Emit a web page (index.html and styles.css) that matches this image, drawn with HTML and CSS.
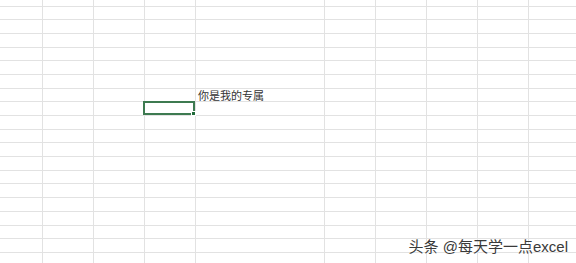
FILE: index.html
```html
<!DOCTYPE html>
<html>
<head>
<meta charset="utf-8">
<link rel="stylesheet" href="styles.css">
</head>
<body>
<div class="sheet">
  <div class="row first"><span class="c"></span><span class="c"></span><span class="c"></span><span class="c"></span><span class="c wide"></span><span class="c"></span><span class="c"></span><span class="c"></span><span class="c"></span><span class="c"></span></div>
  <div class="row"><span class="c"></span><span class="c"></span><span class="c"></span><span class="c"></span><span class="c wide"></span><span class="c"></span><span class="c"></span><span class="c"></span><span class="c"></span><span class="c"></span></div>
  <div class="row"><span class="c"></span><span class="c"></span><span class="c"></span><span class="c"></span><span class="c wide"></span><span class="c"></span><span class="c"></span><span class="c"></span><span class="c"></span><span class="c"></span></div>
  <div class="row"><span class="c"></span><span class="c"></span><span class="c"></span><span class="c"></span><span class="c wide"></span><span class="c"></span><span class="c"></span><span class="c"></span><span class="c"></span><span class="c"></span></div>
  <div class="row"><span class="c"></span><span class="c"></span><span class="c"></span><span class="c"></span><span class="c wide"></span><span class="c"></span><span class="c"></span><span class="c"></span><span class="c"></span><span class="c"></span></div>
  <div class="row"><span class="c"></span><span class="c"></span><span class="c"></span><span class="c"></span><span class="c wide"></span><span class="c"></span><span class="c"></span><span class="c"></span><span class="c"></span><span class="c"></span></div>
  <div class="row"><span class="c"></span><span class="c"></span><span class="c"></span><span class="c"></span><span class="c wide"></span><span class="c"></span><span class="c"></span><span class="c"></span><span class="c"></span><span class="c"></span></div>
  <div class="row"><span class="c"></span><span class="c"></span><span class="c"></span><span class="c"></span><span class="c wide text">你是我的专属</span><span class="c"></span><span class="c"></span><span class="c"></span><span class="c"></span><span class="c"></span></div>
  <div class="row"><span class="c"></span><span class="c"></span><span class="c"></span><span class="c selected"><span class="sel"><span class="handle"></span></span></span><span class="c wide"></span><span class="c"></span><span class="c"></span><span class="c"></span><span class="c"></span><span class="c"></span></div>
  <div class="row"><span class="c"></span><span class="c"></span><span class="c"></span><span class="c"></span><span class="c wide"></span><span class="c"></span><span class="c"></span><span class="c"></span><span class="c"></span><span class="c"></span></div>
  <div class="row"><span class="c"></span><span class="c"></span><span class="c"></span><span class="c"></span><span class="c wide"></span><span class="c"></span><span class="c"></span><span class="c"></span><span class="c"></span><span class="c"></span></div>
  <div class="row"><span class="c"></span><span class="c"></span><span class="c"></span><span class="c"></span><span class="c wide"></span><span class="c"></span><span class="c"></span><span class="c"></span><span class="c"></span><span class="c"></span></div>
  <div class="row"><span class="c"></span><span class="c"></span><span class="c"></span><span class="c"></span><span class="c wide"></span><span class="c"></span><span class="c"></span><span class="c"></span><span class="c"></span><span class="c"></span></div>
  <div class="row"><span class="c"></span><span class="c"></span><span class="c"></span><span class="c"></span><span class="c wide"></span><span class="c"></span><span class="c"></span><span class="c"></span><span class="c"></span><span class="c"></span></div>
  <div class="row"><span class="c"></span><span class="c"></span><span class="c"></span><span class="c"></span><span class="c wide"></span><span class="c"></span><span class="c"></span><span class="c"></span><span class="c"></span><span class="c"></span></div>
  <div class="row"><span class="c"></span><span class="c"></span><span class="c"></span><span class="c"></span><span class="c wide"></span><span class="c"></span><span class="c"></span><span class="c"></span><span class="c"></span><span class="c"></span></div>
  <div class="row"><span class="c"></span><span class="c"></span><span class="c"></span><span class="c"></span><span class="c wide"></span><span class="c"></span><span class="c"></span><span class="c"></span><span class="c"></span><span class="c"></span></div>
  <div class="row"><span class="c"></span><span class="c"></span><span class="c"></span><span class="c"></span><span class="c wide"></span><span class="c"></span><span class="c"></span><span class="c"></span><span class="c"></span><span class="c"></span></div>
  <div class="row"><span class="c"></span><span class="c"></span><span class="c"></span><span class="c"></span><span class="c wide"></span><span class="c"></span><span class="c"></span><span class="c"></span><span class="c"></span><span class="c"></span></div>
  <div class="row"><span class="c"></span><span class="c"></span><span class="c"></span><span class="c"></span><span class="c wide"></span><span class="c"></span><span class="c"></span><span class="c"></span><span class="c"></span><span class="c"></span></div>
  <div class="watermark">头条 @每天学一点excel</div>
</div>
</body>
</html>
```
FILE: styles.css
```css
html, body {
  margin: 0;
  padding: 0;
  background: #ffffff;
}
.sheet {
  position: relative;
  width: 576px;
  height: 263px;
  overflow: hidden;
  background: #ffffff;
  font-family: "Noto Sans CJK SC", "Noto Sans", sans-serif;
}
.row {
  display: flex;
  height: 13.7px;
  box-sizing: border-box;
}
.row.first {
  height: 6.5px;
}
.c {
  flex: 0 0 51px;
  box-sizing: border-box;
  border-right: 1px solid #e2e2e2;
  border-bottom: 1px solid #e2e2e2;
}
.c:first-child {
  flex-basis: 43px;
}
.c.wide {
  flex-basis: 129px;
}
.c.text {
  display: flex;
  align-items: flex-end;
  padding-left: 2px;
  font-size: 11px;
  line-height: 11px;
  color: #333333;
  white-space: nowrap;
}
.c.selected {
  position: relative;
}
.sel {
  position: absolute;
  left: -2px;
  top: -1px;
  right: 0;
  bottom: 0;
  border: 2px solid #3d7a50;
}
.handle {
  position: absolute;
  right: -3px;
  bottom: -3px;
  width: 3px;
  height: 3px;
  background: #1f6b3a;
  border: 1px solid #ffffff;
}
.watermark {
  position: absolute;
  right: 8px;
  top: 239px;
  font-family: "Liberation Sans", "Noto Sans CJK SC", sans-serif;
  font-size: 15px;
  line-height: 16px;
  color: #3a3a3a;
  text-shadow: 0 0 1px #ffffff, 0 0 2px #ffffff;
  white-space: nowrap;
}
```
